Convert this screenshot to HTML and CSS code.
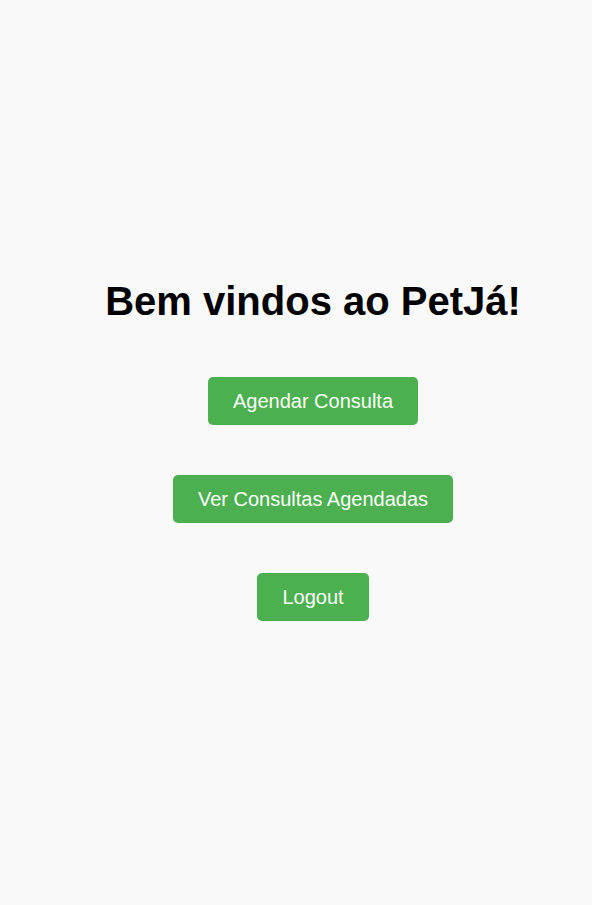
FILE: index.html
```html
<!DOCTYPE html>
<html lang="pt">
<head>
<meta charset="utf-8">
<title>PetJá</title>
<link rel="stylesheet" href="styles.css">
</head>
<body>
<main class="home">
  <h1 class="title">Bem vindos ao PetJá!</h1>
  <button class="btn" type="button">Agendar Consulta</button>
  <button class="btn" type="button">Ver Consultas Agendadas</button>
  <button class="btn" type="button">Logout</button>
</main>
</body>
</html>
```
FILE: styles.css
```css
html, body {
  margin: 0;
  padding: 0;
  background: #f9f9f9;
}
body {
  font-family: "Liberation Sans", Arial, sans-serif;
}
.home {
  box-sizing: border-box;
  min-height: 100vh;
  padding-left: 34px;
  padding-bottom: 6px;
  display: flex;
  flex-direction: column;
  align-items: center;
  justify-content: center;
  gap: 50px;
}
.title {
  margin: 0 0 3px;
  font-size: 40px;
  line-height: 46px;
  font-weight: bold;
  color: #000;
}
.btn {
  font-family: "Liberation Sans", Arial, sans-serif;
  font-size: 20px;
  line-height: 24px;
  padding: 12px 25px;
  border: none;
  border-radius: 5px;
  background: #4caf50;
  color: #fff;
  cursor: pointer;
}
```
